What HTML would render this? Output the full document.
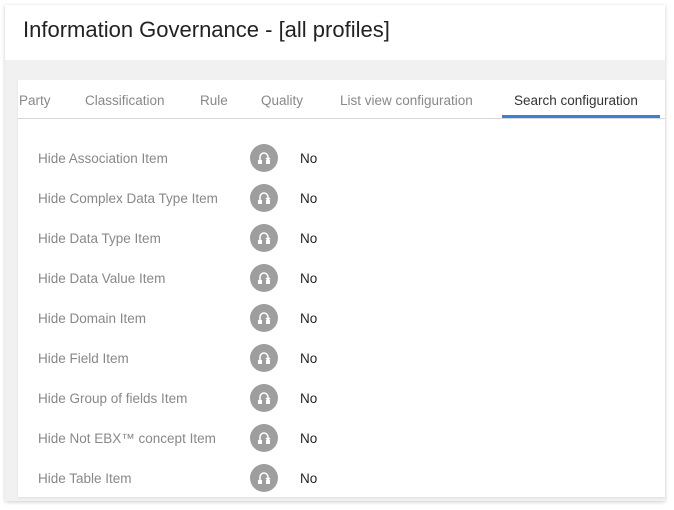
<!DOCTYPE html><html><head><style>
body{margin:0;width:674px;height:510px;background:#fff;font-family:"Liberation Sans",sans-serif;position:relative;overflow:hidden}
.outer{position:absolute;left:5px;top:5px;width:660px;height:496px;background:#f1f1f1;box-shadow:0 1px 4px rgba(0,0,0,.2)}
.head{position:absolute;left:0;top:0;width:660px;height:55px;background:#fff}
.head h1{margin:0;position:absolute;left:18px;top:12px;font-size:22px;font-weight:normal;color:#222}
.card{position:absolute;left:13px;top:75px;width:647px;height:417px;background:#fff;box-shadow:0 1px 2px rgba(0,0,0,.08)}
.tabs{position:absolute;left:0;top:0;width:647px;height:38px;border-bottom:1px solid #d8d8d8}
.tab{position:absolute;top:13px;font-size:13.5px;color:#888}
.act{color:#333}
.bar{position:absolute;left:484px;top:35px;width:158px;height:3px;background:#3d7fd6}
.row{position:absolute;left:20px;height:30px;width:400px}
.row .l{position:absolute;left:0;top:7px;font-size:13.5px;color:#888}
.row .i{position:absolute;left:212px;top:0px;width:28px;height:28px;border-radius:50%;background:#9e9e9e}
.row .v{position:absolute;left:262px;top:7px;font-size:13.5px;color:#222}
</style></head><body>
<div class="outer">
<div class="head"><h1>Information Governance - [all profiles]</h1></div>
<div class="card">
<div class="tabs">
<span class="tab" style="left:1px">Party</span>
<span class="tab" style="left:67px">Classification</span>
<span class="tab" style="left:182px">Rule</span>
<span class="tab" style="left:243px">Quality</span>
<span class="tab" style="left:322px">List view configuration</span>
<span class="tab act" style="left:496px">Search configuration</span>
<div class="bar"></div>
</div>
</div></div>
<div style="position:absolute;left:18px;top:1px">
<div class="row" style="top:143px"><span class="l">Hide Association Item</span><span class="i"><svg width="28" height="28"><path d="M10 16v-3a4 4 0 0 1 8 0v2" stroke="#fff" stroke-width="1.6" fill="none"/><path d="M16 14l2 2 2-2" stroke="#fff" stroke-width="1.4" fill="none"/><rect x="8" y="16" width="4" height="4" fill="#fff"/><rect x="16" y="16" width="4" height="4" fill="#fff"/></svg></span><span class="v">No</span></div>
<div class="row" style="top:183px"><span class="l">Hide Complex Data Type Item</span><span class="i"><svg width="28" height="28"><path d="M10 16v-3a4 4 0 0 1 8 0v2" stroke="#fff" stroke-width="1.6" fill="none"/><path d="M16 14l2 2 2-2" stroke="#fff" stroke-width="1.4" fill="none"/><rect x="8" y="16" width="4" height="4" fill="#fff"/><rect x="16" y="16" width="4" height="4" fill="#fff"/></svg></span><span class="v">No</span></div>
<div class="row" style="top:223px"><span class="l">Hide Data Type Item</span><span class="i"><svg width="28" height="28"><path d="M10 16v-3a4 4 0 0 1 8 0v2" stroke="#fff" stroke-width="1.6" fill="none"/><path d="M16 14l2 2 2-2" stroke="#fff" stroke-width="1.4" fill="none"/><rect x="8" y="16" width="4" height="4" fill="#fff"/><rect x="16" y="16" width="4" height="4" fill="#fff"/></svg></span><span class="v">No</span></div>
<div class="row" style="top:263px"><span class="l">Hide Data Value Item</span><span class="i"><svg width="28" height="28"><path d="M10 16v-3a4 4 0 0 1 8 0v2" stroke="#fff" stroke-width="1.6" fill="none"/><path d="M16 14l2 2 2-2" stroke="#fff" stroke-width="1.4" fill="none"/><rect x="8" y="16" width="4" height="4" fill="#fff"/><rect x="16" y="16" width="4" height="4" fill="#fff"/></svg></span><span class="v">No</span></div>
<div class="row" style="top:303px"><span class="l">Hide Domain Item</span><span class="i"><svg width="28" height="28"><path d="M10 16v-3a4 4 0 0 1 8 0v2" stroke="#fff" stroke-width="1.6" fill="none"/><path d="M16 14l2 2 2-2" stroke="#fff" stroke-width="1.4" fill="none"/><rect x="8" y="16" width="4" height="4" fill="#fff"/><rect x="16" y="16" width="4" height="4" fill="#fff"/></svg></span><span class="v">No</span></div>
<div class="row" style="top:343px"><span class="l">Hide Field Item</span><span class="i"><svg width="28" height="28"><path d="M10 16v-3a4 4 0 0 1 8 0v2" stroke="#fff" stroke-width="1.6" fill="none"/><path d="M16 14l2 2 2-2" stroke="#fff" stroke-width="1.4" fill="none"/><rect x="8" y="16" width="4" height="4" fill="#fff"/><rect x="16" y="16" width="4" height="4" fill="#fff"/></svg></span><span class="v">No</span></div>
<div class="row" style="top:383px"><span class="l">Hide Group of fields Item</span><span class="i"><svg width="28" height="28"><path d="M10 16v-3a4 4 0 0 1 8 0v2" stroke="#fff" stroke-width="1.6" fill="none"/><path d="M16 14l2 2 2-2" stroke="#fff" stroke-width="1.4" fill="none"/><rect x="8" y="16" width="4" height="4" fill="#fff"/><rect x="16" y="16" width="4" height="4" fill="#fff"/></svg></span><span class="v">No</span></div>
<div class="row" style="top:423px"><span class="l">Hide Not EBX™ concept Item</span><span class="i"><svg width="28" height="28"><path d="M10 16v-3a4 4 0 0 1 8 0v2" stroke="#fff" stroke-width="1.6" fill="none"/><path d="M16 14l2 2 2-2" stroke="#fff" stroke-width="1.4" fill="none"/><rect x="8" y="16" width="4" height="4" fill="#fff"/><rect x="16" y="16" width="4" height="4" fill="#fff"/></svg></span><span class="v">No</span></div>
<div class="row" style="top:463px"><span class="l">Hide Table Item</span><span class="i"><svg width="28" height="28"><path d="M10 16v-3a4 4 0 0 1 8 0v2" stroke="#fff" stroke-width="1.6" fill="none"/><path d="M16 14l2 2 2-2" stroke="#fff" stroke-width="1.4" fill="none"/><rect x="8" y="16" width="4" height="4" fill="#fff"/><rect x="16" y="16" width="4" height="4" fill="#fff"/></svg></span><span class="v">No</span></div>
</div>
</body></html>
